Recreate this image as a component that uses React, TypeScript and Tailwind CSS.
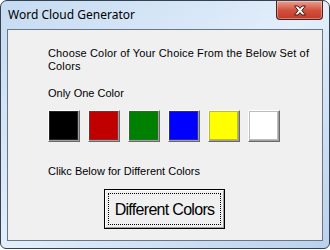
import React from 'react';

const swatches = ['#000000', '#c00000', '#008000', '#0000ff', '#ffff00', '#ffffff'];

const CloseButton: React.FC = () => (
  <div className="w-[47px] h-[19px] rounded-b-[4px] border border-t-0 border-[#4e1f18] bg-gradient-to-b from-[#e8a090] via-[#d3513f] to-[#c23a28] shadow-[inset_0_0_0_1px_rgba(255,255,255,0.35)] flex items-center justify-center">
    <svg width="14" height="11" viewBox="0 0 14 11">
      <path
        d="M1.5 1 H5 L7 3.4 L9 1 H12.5 L8.8 5.5 L12.5 10 H9 L7 7.6 L5 10 H1.5 L5.2 5.5 Z"
        fill="#ffffff"
        stroke="#3b1a14"
        strokeWidth="1"
        strokeLinejoin="round"
      />
    </svg>
  </div>
);

const Swatch: React.FC<{ color: string }> = ({ color }) => (
  <div className="w-[32px] h-[32px] border-t border-l border-t-white border-l-white border-r border-b border-r-[#696969] border-b-[#696969]">
    <div className="w-full h-full border-b border-r border-b-[#a0a0a0] border-r-[#a0a0a0]">
      <div className="w-full h-full border border-[#5a5a5a]/40" style={{ backgroundColor: color }} />
    </div>
  </div>
);

export default function App() {
  return (
    <div className="w-[330px] h-[250px] bg-white font-['Liberation_Sans',Arial,sans-serif]">
      <div className="h-[249px] flex flex-col rounded-t-[7px] rounded-b-[6px] border border-[#36404f] bg-gradient-to-br from-[#c5dbf2] via-[#e2eefa] to-[#b9d2ec] px-[6px] pb-[7px]">
        <div className="h-[28px] flex items-start justify-between">
          <div className="pt-[6px] pl-[1px] text-[12px] leading-[16px] text-black font-['Noto_Sans',sans-serif]">
            Word Cloud Generator
          </div>
          <CloseButton />
        </div>
        <div className="flex-1 border border-[#6a7585] bg-[#f0f0f0] pl-[40px] pt-[17px] text-[11px] leading-[13px] text-black">
          <p className="w-[272px] tracking-[0.15px]">Choose Color of Your Choice From the Below Set of Colors</p>
          <p className="mt-[14px]">Only One Color</p>
          <div className="mt-[10px] flex gap-[8px]">
            {swatches.map((c) => (
              <Swatch key={c} color={c} />
            ))}
          </div>
          <p className="mt-[23px]">Clikc Below for Different Colors</p>
          <button className="mt-[11px] ml-[56px] w-[121px] h-[40px] border border-black bg-[#f0f0f0] p-0 block">
            <div className="w-full h-full border-t border-l border-t-white border-l-white border-b border-r border-b-[#a0a0a0] border-r-[#a0a0a0] p-[2px]">
              <div className="w-full h-full border border-dotted border-black flex items-center justify-center text-[16px] tracking-[-0.7px] text-black">
                Different Colors
              </div>
            </div>
          </button>
        </div>
      </div>
    </div>
  );
}
